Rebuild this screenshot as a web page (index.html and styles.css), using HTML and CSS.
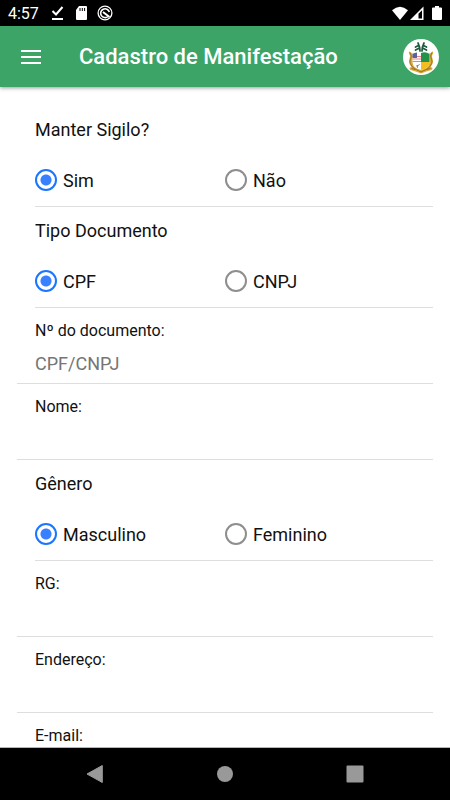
FILE: index.html
```
<!DOCTYPE html>
<html lang="pt-BR">
<head>
    <meta charset="UTF-8">
    <meta name="viewport" content="width=device-width, initial-scale=1.0">
    <title>Cadastro de Manifestação</title>
    <link rel="stylesheet" href="styles.css">
</head>
<body>
    <div class="status-bar">
        <span class="clock">4:57</span>
        <svg class="status-icon" width="16" height="16" viewBox="0 0 16 16">
            <path d="M3.500 6l3.500 3.500L13.500 2M3 14h11" fill="none" stroke="#fff" stroke-width="2"/>
        </svg>
        <svg class="status-icon" width="16" height="16" viewBox="0 0 16 16">
            <path d="M6 1h7a1 1 0 0 1 1 1v12a1 1 0 0 1-1 1H4a1 1 0 0 1-1-1V5z" fill="#fff"/>
            <path d="M7 3v3M9.300 3v3M11.600 3v3" stroke="#000" stroke-width="1"/>
        </svg>
        <svg class="status-icon" width="16" height="16" viewBox="0 0 16 16">
            <g fill="none" stroke="#fff">
                <circle cx="8" cy="8" r="6.900" stroke-width="1.300"/>
                <path d="M11 11.500A4.400 4.400 0 1 1 12.300 7" stroke-width="1.600"/>
                <path d="M6 7l6.500 5" stroke-width="2"/>
            </g>
        </svg>
        <div class="status-right">
            <svg width="16" height="16" viewBox="0 0 16 16">
                <path d="M0 5.200Q8-1.800 16 5.200L8 15z" fill="#fff"/>
            </svg>
            <svg width="14" height="16" viewBox="0 0 14 16">
                <path d="M0 15L13.500 1.500V15z" fill="#fff"/>
                <path d="M8.500 8.800l3.500-3.500v8.200H8.500z" fill="#000"/>
            </svg>
            <svg class="battery" width="10" height="16" viewBox="0 0 10 16">
                <path d="M3 1h4v1.500h2a1 1 0 0 1 1 1V14a1 1 0 0 1-1 1H1a1 1 0 0 1-1-1V3.500a1 1 0 0 1 1-1h2z" fill="#fff"/>
            </svg>
        </div>
    </div>

    <header class="toolbar">
        <button class="menu-button" type="button" aria-label="Menu">
            <svg width="20" height="14" viewBox="0 0 20 14">
                <path d="M0 1h20M0 7h20M0 13h20" stroke="#fff" stroke-width="2"/>
            </svg>
        </button>
        <h1>Cadastro de Manifestação</h1>
        <svg class="crest" width="36" height="36" viewBox="0 0 36 36">
            <circle cx="18" cy="18" r="18" fill="#fff"/>
            <!-- palmas -->
            <g fill="none" stroke="#1d5a3c" stroke-width="1.700" stroke-linecap="round">
                <path d="M17 12q0-4-2-8M15.500 6.500l-3 1.500M16.500 9l-4 2M19 12q0-4 2-8M20.500 6.500l3 1.500M19.500 9l4 2"/>
            </g>
            <!-- moldura -->
            <path d="M9 14.500Q5 10.500 6 14.500q2 2.500 .5 5Q5 24 8.500 28q-3.500 1-1 3 5 1 10.500 3.500 5.500-2.500 10.500-3.500 2.500-2-1-3 3.500-4 2-8.500-1.500-2.500 .5-5 1-4-3 0" fill="#d9ad3c"/>
            <path d="M7 13.500q2.500 3.500 .5 7T11 29.500l7 3.500 7-3.500q5.500-5.500 3.500-9T29 13.500M8.500 29.500l4 1M27.500 29.500l-4 1" fill="none" stroke="#9c7220" stroke-width="1"/>
            <!-- escudo -->
            <path d="M9.500 15q4-3 8.500-1 4.500-2 8.500 1v8q0 6-8.500 8-8.500-2-8.500-8z" fill="#fff"/>
            <path d="M18 14q4.500-2 8.500 1v8H18z" fill="#22914b"/>
            <path d="M18 23h8.500q0 6-8.500 8z" fill="#f3bd1d"/>
            <path d="M9.500 17.500H18M9.500 20H18M9.500 22.500H18" stroke="#ea8288" stroke-width="1"/>
            <path d="M9.500 15q2-1.500 4.500-1.500V19H9.500z" fill="#59639b"/>
            <path d="M13 27l2.500-.5 1-1.500M14.500 29v-3" fill="none" stroke="#777" stroke-width=".8"/>
        </svg>
    </header>

    <main class="content">
        <form class="form">
            <fieldset class="group">
                <legend>Manter Sigilo?</legend>
                <div class="options">
                    <label><input type="radio" name="sigilo" checked>Sim</label>
                    <label><input type="radio" name="sigilo">Não</label>
                </div>
            </fieldset>

            <fieldset class="group">
                <legend>Tipo Documento</legend>
                <div class="options">
                    <label><input type="radio" name="tipo" checked>CPF</label>
                    <label><input type="radio" name="tipo">CNPJ</label>
                </div>
            </fieldset>

            <div class="field">
                <label for="documento">Nº do documento:</label>
                <input type="text" id="documento" placeholder="CPF/CNPJ">
            </div>

            <div class="field">
                <label for="nome">Nome:</label>
                <input type="text" id="nome">
            </div>

            <fieldset class="group">
                <legend>Gênero</legend>
                <div class="options">
                    <label><input type="radio" name="genero" checked>Masculino</label>
                    <label><input type="radio" name="genero">Feminino</label>
                </div>
            </fieldset>

            <div class="field">
                <label for="rg">RG:</label>
                <input type="text" id="rg">
            </div>

            <div class="field">
                <label for="endereco">Endereço:</label>
                <input type="text" id="endereco">
            </div>

            <div class="field">
                <label for="email">E-mail:</label>
                <input type="email" id="email">
            </div>
        </form>
    </main>

    <nav class="nav-bar">
        <button type="button" aria-label="Voltar">
            <svg width="18" height="18" viewBox="0 0 18 18">
                <path d="M16.300.5V17.500L1 9z" fill="#999" stroke="#999" stroke-linejoin="round"/>
            </svg>
        </button>
        <button type="button" aria-label="Início">
            <svg width="18" height="18" viewBox="0 0 18 18"><circle cx="9" cy="9" r="8" fill="#999"/></svg>
        </button>
        <button type="button" aria-label="Recentes">
            <svg width="18" height="18" viewBox="0 0 18 18"><rect x=".5" y=".5" width="17" height="17" rx="1" fill="#999"/></svg>
        </button>
    </nav>
</body>
</html>
```

FILE: styles.css
```
* {
    box-sizing: border-box;
}

body {
    display: flex;
    flex-direction: column;
    height: 100vh;
    margin: 0;
    font-family: Roboto, "Liberation Sans", sans-serif;
    font-size: 18px;
    color: #111;
    background-color: #fff;
}

svg {
    display: block;
}

button {
    padding: 0;
    border: none;
    background: none;
    cursor: pointer;
}

.status-bar {
    display: flex;
    flex: none;
    align-items: center;
    gap: 8px;
    height: 26px;
    padding: 0 8px;
    color: #fff;
    background-color: #000;
}

.clock {
    margin-right: 2px;
    font-size: 16px;
}

.status-right {
    display: flex;
    gap: 2px;
    margin-left: auto;
}

.battery {
    margin-left: 6px;
}

.toolbar {
    display: flex;
    flex: none;
    align-items: center;
    height: 61px;
    padding: 0 11px 0 9px;
    color: #fff;
    background-color: #3ba466;
    box-shadow: 0 1px 4px rgba(0, 0, 0, 0.4);
    z-index: 1;
}

.menu-button {
    padding: 12px;
}

.toolbar h1 {
    flex: 1;
    margin: 0 0 0 26px;
    font-size: 22px;
    font-weight: 500;
}

.content {
    flex: 1;
    min-height: 0;
    overflow-y: auto;
    scrollbar-width: none;
}

.form {
    padding: 19px 17px;
}

.group {
    min-width: 0;
    margin: 0 0 0 18px;
    padding: 0;
    border: none;
    border-bottom: 1px solid #dedede;
}

.group legend {
    padding: 0;
    line-height: 48px;
}

.options {
    display: grid;
    grid-template-columns: 1fr 1fr;
    height: 52px;
    padding-right: 18px;
}

.options label {
    display: flex;
    align-items: center;
    gap: 6px;
}

.options input {
    appearance: none;
    width: 22px;
    height: 22px;
    margin: 0;
    border: 2px solid #8e8e8e;
    border-radius: 50%;
}

.options input:checked {
    border-color: #1a75ff;
    background: radial-gradient(circle, #3880ff 5px, transparent 6px);
}

.field {
    height: 76px;
    padding: 13px 18px 0;
    border-bottom: 1px solid #dedede;
}

.field label {
    display: block;
    font-size: 16px;
    line-height: 20px;
}

.field input {
    display: block;
    width: 100%;
    height: 41px;
    padding: 4px 0 0;
    border: none;
    outline: none;
    font: inherit;
    background: none;
}

.field input::placeholder {
    color: #757575;
}

.nav-bar {
    display: flex;
    flex: none;
    align-items: center;
    justify-content: space-between;
    height: 53px;
    padding: 0 86px;
    border-top: 1px solid #b5b5b5;
    background-color: #000;
}
```
